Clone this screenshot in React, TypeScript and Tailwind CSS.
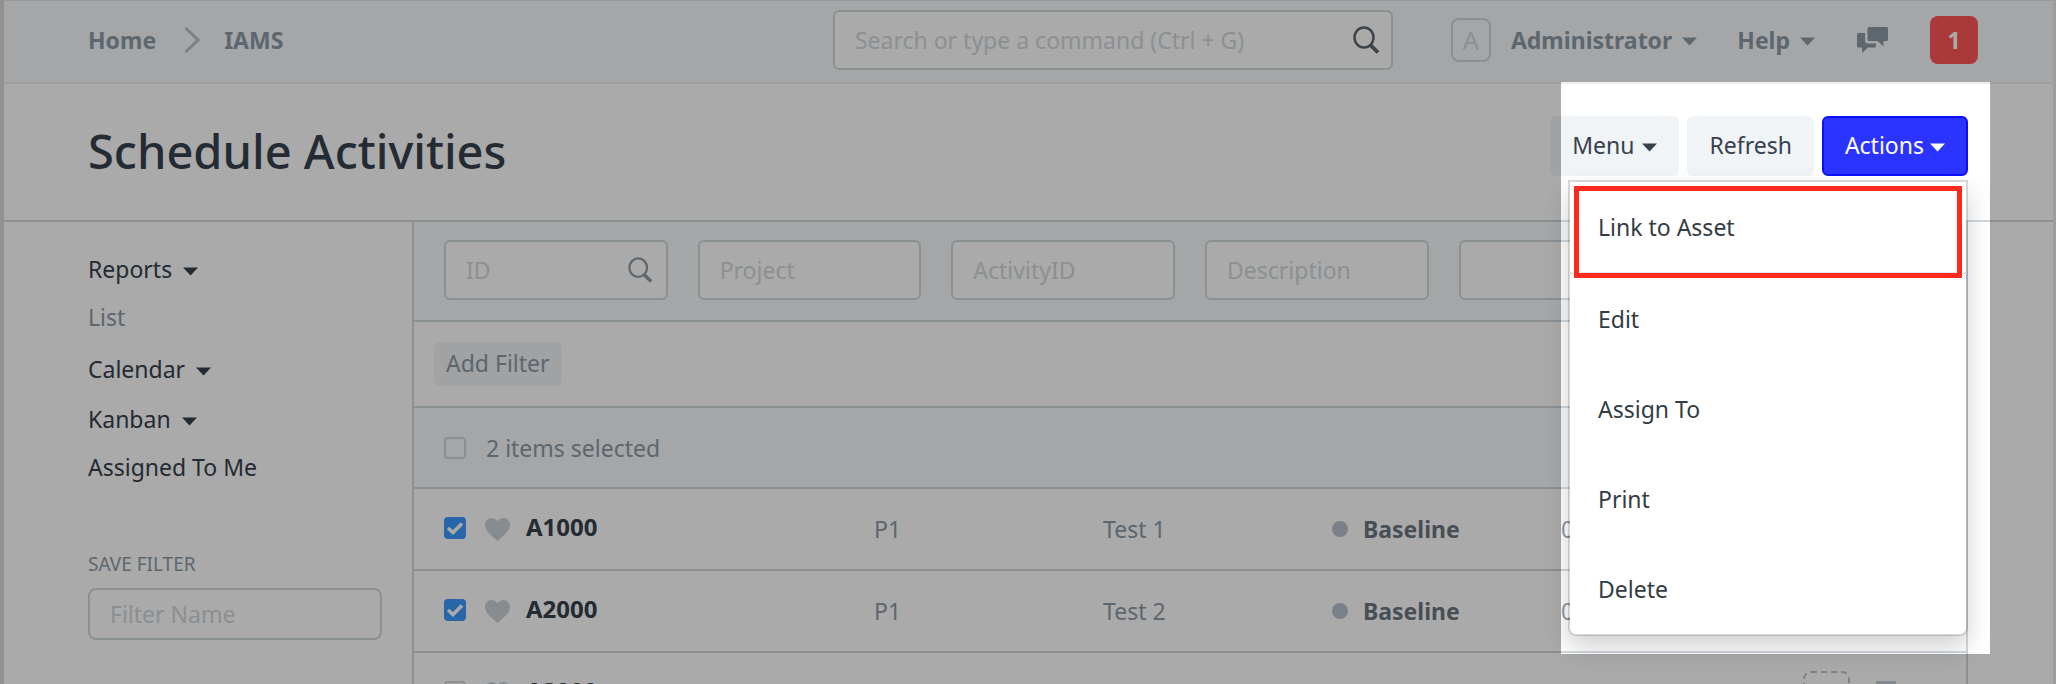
import { useState } from "react";

function Caret() {
  return (
    <svg width="15" height="9" viewBox="0 0 15 9" fill="currentColor" aria-hidden="true" className="mt-1 shrink-0">
      <path d="M0 0.5h15L7.5 8.5z" />
    </svg>
  );
}

function SearchIcon({ className }: { className: string }) {
  return (
    <svg width="28" height="28" viewBox="0 0 28 28" fill="none" stroke="currentColor" aria-hidden="true" className={className}>
      <ellipse cx="11" cy="11.5" rx="9.5" ry="10" strokeWidth="2.4" />
      <path d="M17.500 19l7.500 7.500" strokeWidth="3.8" />
    </svg>
  );
}

function Heart() {
  return (
    <svg width="25" height="23" viewBox="0 0 25 23" fill="currentColor" aria-hidden="true" className="shrink-0 text-[#cbd2d9]">
      <path d="M12.5 23C5.5 17 0 12.500 0 7 0 3 2.800 0 6.500 0c2.500 0 4.700 1.300 6 3.300C13.800 1.300 16 0 18.500 0 22.200 0 25 3 25 7c0 5.500-5.500 10-12.500 16z" />
    </svg>
  );
}

function Chats() {
  return (
    <svg width="31" height="26" viewBox="0 0 31 26" fill="currentColor" aria-hidden="true">
      <path d="M12 0h17.500q1.500 0 1.500 1.500v11q0 1.500-1.500 1.500H26.500v5.500L20.500 14H12q-1.500 0-1.500-1.500v-11Q10.500 0 12 0z" />
      <path d="M1.500 6H8v7.500q0 3 3 3h8V19q0 1.500-1.500 1.500H11L5 26v-5.500H1.500Q0 20.500 0 19V7.500Q0 6 1.500 6z" />
    </svg>
  );
}

function Check({ label, initial = false }: { label: string; initial?: boolean }) {
  const [on, setOn] = useState(initial);
  return (
    <span className="relative flex shrink-0">
      <input
        type="checkbox"
        aria-label={label}
        checked={on}
        onChange={() => setOn(!on)}
        className="size-[22px] appearance-none rounded border-2 border-[#d1d8dd] checked:border-[#3b99fc] checked:bg-[#3b99fc]"
      />
      {on && (
        <svg width="22" height="22" viewBox="0 0 22 22" fill="none" stroke="white" strokeWidth="3.600" aria-hidden="true" className="pointer-events-none absolute inset-0">
          <path d="M4 11l5 4.500L18 6.500" />
        </svg>
      )}
    </span>
  );
}

const views = [
  { name: "Reports", menu: true },
  { name: "List", muted: true },
  { name: "Calendar", menu: true },
  { name: "Kanban", menu: true },
  { name: "Assigned To Me" },
];

const filters = ["ID", "Project", "ActivityID", "Description", "", ""];

const rows = [
  { id: "A1000", project: "P1", description: "Test 1", selected: true },
  { id: "A2000", project: "P1", description: "Test 2", selected: true },
  { id: "A3000", project: "P1", description: "Test 3", selected: false },
];

const actions = ["Link to Asset", "Edit", "Assign To", "Print", "Delete"];

function Navbar() {
  return (
    <nav className="flex h-[83px] items-center border-b-2 border-[#ebeff2] bg-[#f7fafc] pr-[75px] pb-1 pl-[84px] font-bold text-[#8d99a6]">
      <a href="#home">Home</a>
      <svg width="16" height="26" viewBox="0 0 16 26" fill="none" stroke="#b8c2cc" strokeWidth="3" aria-hidden="true" className="mr-6 ml-7">
        <path d="M1.500 1l12.500 12L1.500 25" />
      </svg>
      <a href="#iams">IAMS</a>
      <label className="ml-auto flex h-[60px] w-[560px] items-center rounded-md border-2 border-[#d1d8dd] bg-white pr-2.5 pl-5 font-normal">
        <input
          type="text"
          aria-label="Search"
          placeholder="Search or type a command (Ctrl + G)"
          className="min-w-0 flex-1 outline-none placeholder:text-[#d1d8dd]"
        />
        <SearchIcon className="text-[#5a6570]" />
      </label>
      <span className="ml-[58px] flex h-11 w-10 items-center justify-center rounded-lg border-2 border-[#d1d8dd] text-[26px] font-normal text-[#d1d8dd]">
        A
      </span>
      <button type="button" className="ml-5 flex items-center gap-2.5">
        Administrator <Caret />
      </button>
      <button type="button" className="ml-10 flex items-center gap-2.5">
        Help <Caret />
      </button>
      <button type="button" aria-label="Chat" className="ml-[42px]">
        <Chats />
      </button>
      <button type="button" className="ml-[42px] size-12 rounded-lg bg-[#ff5858] text-white">
        1
      </button>
    </nav>
  );
}

function PageHeader() {
  return (
    <header className="flex items-start justify-between border-b-2 border-[#d1d8dd] pt-8 pr-[85px] pb-[34px] pl-[84px]">
      <h1 className="text-[47px] leading-[70px] font-medium text-[#36414c]">Schedule Activities</h1>
      <div className="relative flex h-[60px] gap-2">
        <button type="button" className="flex items-center gap-2 rounded-md bg-[#f0f4f7] px-[22px] pb-0.5">
          Menu <Caret />
        </button>
        <button type="button" className="rounded-md bg-[#f0f4f7] px-[22px] pb-0.5">
          Refresh
        </button>
        <button type="button" className="flex items-center gap-1.5 rounded-md border-2 border-[#0c10ff] bg-[#2b33ff] px-[21px] pb-0.5 text-white">
          Actions <Caret />
        </button>
        <ul className="absolute top-16 right-0 z-10 w-[400px] rounded-b-lg border-2 border-black/15 bg-white bg-clip-padding shadow-[0_12px_24px_rgba(0,0,0,0.175)]">
          {actions.map((name) => (
            <li key={name} className="first:border-b-2 first:border-[#e3e9ee]">
              <button type="button" className="h-[90px] w-full px-7 text-left text-[#333c44]">
                {name}
              </button>
            </li>
          ))}
        </ul>
        <div className="pointer-events-none absolute -top-[34px] -right-[22px] z-20 h-[572px] w-[429px] shadow-[0_0_0_4000px_rgba(0,0,0,0.333)]" />
        <div className="pointer-events-none absolute top-[70px] right-1.5 z-30 h-[92px] w-[388px] border-[5px] border-[#ff2a1c]" />
      </div>
    </header>
  );
}

function Sidebar() {
  return (
    <aside className="w-[410px] shrink-0 border-r-2 border-[#d1d8dd] pt-[22px] pr-[30px] pl-[84px]">
      <ul>
        {views.map((view) => (
          <li key={view.name}>
            {view.menu ? (
              <button type="button" className="flex h-[50px] items-center gap-[11px]">
                {view.name} <Caret />
              </button>
            ) : (
              <a
                href="#view"
                className={view.muted ? "flex h-[50px] items-center pb-1 text-[#8d99a6]" : "flex h-[50px] items-center pb-1"}
              >
                {view.name}
              </a>
            )}
          </li>
        ))}
      </ul>
      <label htmlFor="filter-name" className="mt-14 block text-[19px] leading-7 text-[#8d99a6]">
        SAVE FILTER
      </label>
      <input
        id="filter-name"
        type="text"
        placeholder="Filter Name"
        className="mt-2.5 h-[52px] w-full rounded-lg border-2 border-[#d1d8dd] px-5 outline-none placeholder:text-[#d1d8dd]"
      />
    </aside>
  );
}

function ActivityList() {
  return (
    <main className="mr-[85px] min-w-0 flex-1 border-r-2 border-[#d1d8dd]">
      <div className="grid grid-cols-6 gap-[30px] border-b-2 border-[#d1d8dd] bg-[#f7fafc] px-[30px] pt-[18px] pb-5">
        {filters.map((name, i) => (
          <label key={i} className="flex h-[60px] min-w-0 items-center rounded-md border-2 border-[#d1d8dd] bg-white pr-3 pl-5">
            <input
              type="text"
              aria-label={name || "Filter"}
              placeholder={name}
              className="w-full min-w-0 outline-none placeholder:text-[#d1d8dd]"
            />
            {i === 0 && <SearchIcon className="size-[26px] shrink-0 text-[#8d99a6]" />}
          </label>
        ))}
      </div>
      <div className="border-b-2 border-[#d1d8dd] p-5">
        <button type="button" className="block h-11 rounded-md bg-[#f0f4f7] px-3 pb-0.5 text-[#8d99a6]">
          Add Filter
        </button>
      </div>
      <table className="w-full table-fixed border-collapse text-left text-[#8d99a6]">
        <colgroup>
          <col className="w-[460px]" />
          <col />
          <col />
          <col />
          <col className="w-[405px]" />
        </colgroup>
        <thead>
          <tr className="h-20 border-b-2 border-[#d1d8dd] bg-[#f7fafc]">
            <th colSpan={5} className="py-0 pr-0 pl-[30px] font-normal">
              <div className="flex items-center gap-5">
                <Check label="Select all" />
                2 items selected
              </div>
            </th>
          </tr>
        </thead>
        <tbody>
          {rows.map((row) => (
            <tr key={row.id} className="h-[82px] border-b-2 border-[#d1d8dd]">
              <td className="pt-0 pr-0 pb-0.5 pl-[30px]">
                <div className="flex items-center">
                  <Check label={"Select " + row.id} initial={row.selected} />
                  <span className="mr-4 ml-[19px] pt-0.5">
                    <Heart />
                  </span>
                  <a href="#activity" className="pb-0.5 text-2xl font-bold text-[#36414c]">
                    {row.id}
                  </a>
                </div>
              </td>
              <td className="p-0">{row.project}</td>
              <td className="p-0">{row.description}</td>
              <td className="p-0">
                <div className="flex items-center gap-[15px] font-bold text-[#6c7680]">
                  <span className="size-4 rounded-full bg-[#b8c2cc]" />
                  Baseline
                </div>
              </td>
              <td className="p-0">
                <div className="flex items-center">
                  <span className="w-[188px]">000 Baseline</span>
                  <span className="w-[54px]">4 M</span>
                  <span className="h-11 w-[47px] rounded-lg border-2 border-dashed border-[#bcc5cd]" />
                  <svg width="20" height="24" viewBox="0 0 20 24" fill="#c3ccd4" aria-hidden="true" className="ml-[26px]">
                    <path d="M1 0h18l1 1v15l-1 1h-9l-5 6v-6H1l-1-1V1z" />
                  </svg>
                </div>
              </td>
            </tr>
          ))}
        </tbody>
      </table>
    </main>
  );
}

export default function App() {
  return (
    <div className="h-screen overflow-hidden border-t border-r-[3px] border-l-4 border-t-[#979899] border-r-[#9c9c9c] border-l-[#919191] bg-white font-['Noto_Sans',sans-serif] text-[23px] leading-8 text-[#36414c]">
      <Navbar />
      <PageHeader />
      <div className="flex min-h-screen">
        <Sidebar />
        <ActivityList />
      </div>
    </div>
  );
}
